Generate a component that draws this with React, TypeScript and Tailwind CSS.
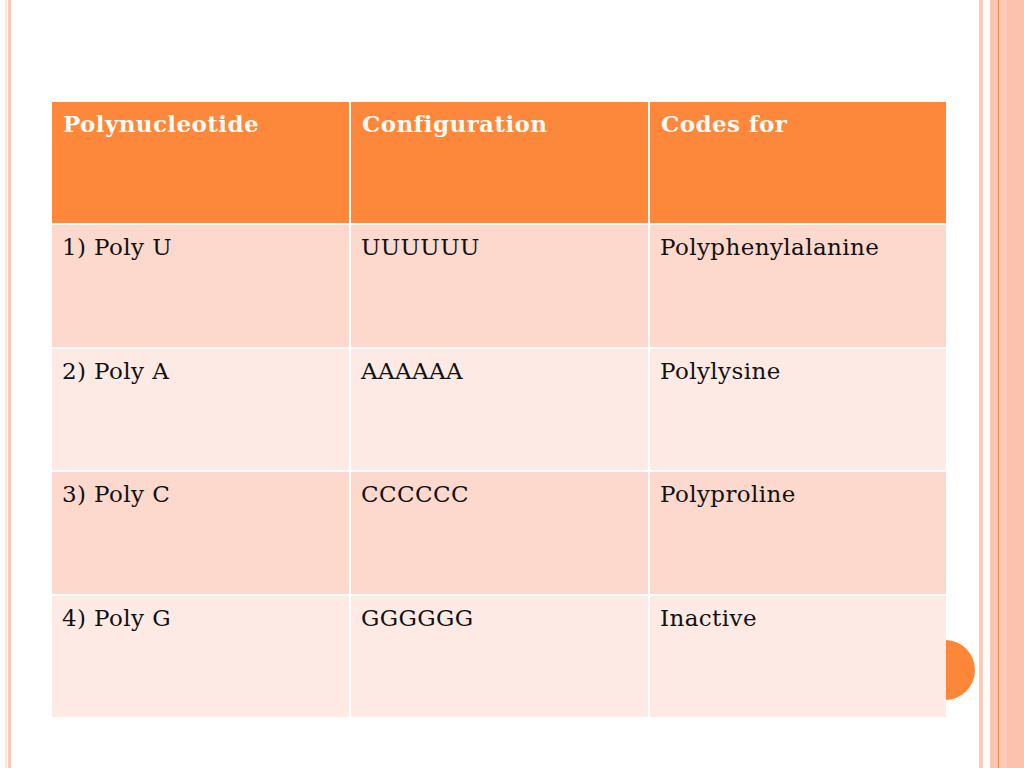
import React from 'react';

const rows = [
  ['1) Poly U', 'UUUUUU', 'Polyphenylalanine'],
  ['2) Poly A', 'AAAAAA', 'Polylysine'],
  ['3) Poly C', 'CCCCCC', 'Polyproline'],
  ['4) Poly G', 'GGGGGG', 'Inactive'],
];

const serif = { fontFamily: '"DejaVu Serif", "Liberation Serif", serif' };

export default function App() {
  return (
    <div className="flex h-[768px] w-[1024px] overflow-hidden bg-white" style={serif}>
      {/* left rule */}
      <div className="flex shrink-0">
        <div className="w-[5px]" />
        <div className="w-[2px] bg-[#fde0d6]" />
        <div className="w-px" />
        <div className="w-[3px] bg-[#fcc7b5]" />
      </div>

      {/* slide body */}
      <div className="relative flex-1 pl-[41px] pt-[102px]">
        <div className="absolute left-[904px] top-[640px] h-[60px] w-[60px] rounded-full bg-[#fd8738]" />
        <div className="relative z-10 grid w-[894px] grid-cols-[297px_297px_296px] gap-[2px]">
          {['Polynucleotide', 'Configuration', 'Codes for'].map((h) => (
            <div
              key={h}
              className="h-[121px] bg-[#fd873b] px-[11px] pt-[5px] text-[23px] font-bold tracking-[0.4px] text-[#fffaf2]"
            >
              {h}
            </div>
          ))}
          {rows.map((r, i) =>
            r.map((c, j) => (
              <div
                key={`${i}-${j}`}
                className={`h-[121.5px] px-[10px] pt-[5px] text-[23px] tracking-[0.4px] text-[#111] ${
                  i % 2 === 0 ? 'bg-[#fdd9cd]' : 'bg-[#feeae5]'
                }`}
              >
                {c}
              </div>
            )),
          )}
        </div>
      </div>

      {/* right stripes */}
      <div className="flex shrink-0">
        <div className="w-[4px] bg-[#fdc9b8]" />
        <div className="w-[7px]" />
        <div className="w-[8px] bg-[#fdc5b1]" />
        <div className="w-px bg-[#f98b4f]" />
        <div className="w-[8px] bg-[#fdcab9]" />
        <div className="w-[17px] bg-[#fdc2ad]" />
      </div>
    </div>
  );
}
